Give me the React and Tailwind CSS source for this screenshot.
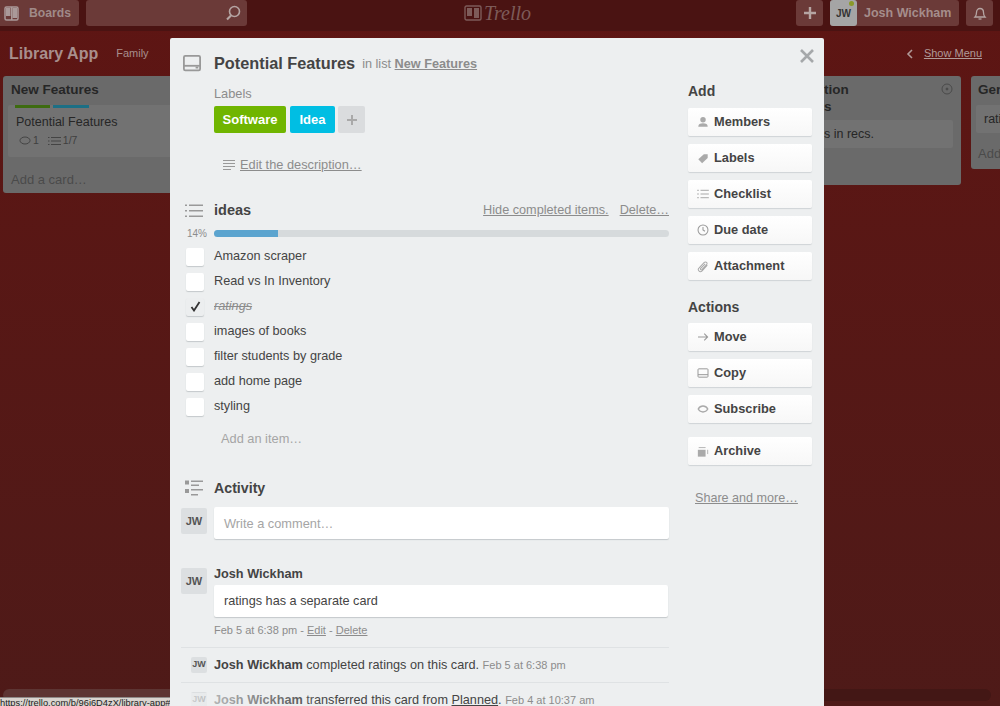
import React from "react";

const CardIcon = ({ s = 18, c = "#999" }) => (
  <svg width={s} height={s * 0.9} viewBox="0 0 20 18" fill="none">
    <rect x="1" y="1" width="18" height="16" rx="1.5" stroke={c} strokeWidth="2" />
    <rect x="1" y="11" width="18" height="2" fill={c} />
    <rect x="14" y="13" width="3" height="2" fill={c} />
  </svg>
);

const ListIcon = ({ c = "#999" }) => (
  <svg width="18" height="16" viewBox="0 0 18 16" fill="none">
    <g fill={c}>
      <rect x="0" y="1.5" width="2" height="1.5" />
      <rect x="0" y="7" width="2" height="1.5" />
      <rect x="0" y="12.5" width="2" height="1.5" />
      <rect x="4" y="1.5" width="14" height="1.5" />
      <rect x="4" y="7" width="14" height="1.5" />
      <rect x="4" y="12.5" width="14" height="1.5" />
    </g>
  </svg>
);

const ActivityIcon = () => (
  <svg width="18" height="17" viewBox="0 0 18 17" fill="#999">
    <rect x="0" y="0.5" width="4" height="4" />
    <rect x="0" y="9" width="4" height="4" />
    <rect x="6" y="0.5" width="12" height="1.5" />
    <rect x="6" y="4.5" width="8" height="1.5" />
    <rect x="6" y="9" width="12" height="1.5" />
    <rect x="6" y="14" width="7" height="1.5" />
  </svg>
);

const SideIcons = {
  Members: (
    <svg width="12" height="12" viewBox="0 0 14 14" fill="#aaa"><circle cx="7" cy="4.5" r="3.2" /><path d="M1.500 12.500c0-3 2-4 5.500-4s5.500 1 5.500 4z" /></svg>
  ),
  Labels: (
    <svg width="12" height="12" viewBox="0 0 14 14" fill="#aaa"><path d="M1.500 8.500 8 2.500h4.500v4.500l-6.500 6z" /></svg>
  ),
  Checklist: (
    <svg width="12" height="10" viewBox="0 0 14 12" fill="#999"><rect y="1" width="2" height="1" /><rect y="5.5" width="2" height="1" /><rect y="10" width="2" height="1" /><rect x="4" y="1" width="10" height="1" /><rect x="4" y="5.5" width="10" height="1" /><rect x="4" y="10" width="10" height="1" /></svg>
  ),
  "Due date": (
    <svg width="12" height="12" viewBox="0 0 14 14" fill="none" stroke="#999" strokeWidth="1.2"><circle cx="7" cy="7" r="5.8" /><path d="M7 3.500V7l2.300 1.500" /></svg>
  ),
  Attachment: (
    <svg width="12" height="13" viewBox="0 0 14 14" fill="none" stroke="#aaa" strokeWidth="1.200"><path d="M12 5.500 6 12c-1.200 1.200-3 1-3.800.2S1.300 9.800 2.500 8.600L8.500 2.300c.8-.8 2-.7 2.700 0s.8 1.800 0 2.600L5.700 10.700c-.4.400-1 .4-1.400 0s-.4-1 0-1.400L9.500 4" /></svg>
  ),
  Move: (
    <svg width="12" height="10" viewBox="0 0 14 12" fill="none" stroke="#999" strokeWidth="1.300"><path d="M1 6h11.500M8.500 2l4 4-4 4" /></svg>
  ),
  Copy: (
    <svg width="12" height="10" viewBox="0 0 14 12" fill="none" stroke="#999" strokeWidth="1.200"><rect x="1" y="1" width="12" height="10" rx="1" /><path d="M1 8h12" /></svg>
  ),
  Subscribe: (
    <svg width="12" height="8" viewBox="0 0 14 10" fill="none" stroke="#aaa" strokeWidth="1.700"><path d="M1 5c1.500-2.500 3.500-3.700 6-3.700S11.500 2.500 13 5c-1.500 2.500-3.500 3.700-6 3.700S2.500 7.500 1 5z" /></svg>
  ),
  Archive: (
    <svg width="12" height="11" viewBox="0 0 14 12" fill="#aaa"><rect x="1" y="4" width="9" height="8" /><rect x="2" y="1" width="8" height="1" /><rect x="12" y="4" width="1" height="5" /></svg>
  ),
};

const SideButton = ({ label, className = "" }) => (
  <button className={`flex h-[28px] w-full items-center rounded-[2px] bg-gradient-to-b from-white to-[#f7f7f7] pl-[9px] text-left text-[12.800px] font-bold text-[#444] shadow-[0_1px_1px_#cfd3d6] ${className}`}>
    <span className="flex w-[12px] shrink-0 justify-center">{SideIcons[label]}</span>
    <span className="ml-[5px]">{label}</span>
  </button>
);

const Avatar = ({ className = "", text = "JW" }) => (
  <div className={`flex shrink-0 items-center justify-center rounded-[2px] bg-[#dcdfe1] font-bold text-[#555] ${className}`}>{text}</div>
);

const items = [
  ["Amazon scraper", false],
  ["Read vs In Inventory", false],
  ["ratings", true],
  ["images of books", false],
  ["filter students by grade", false],
  ["add home page", false],
  ["styling", false],
];

const List = ({ className = "", children }) => (
  <div className={`shrink-0 rounded-[3px] bg-[#6a6a6a] ${className}`}>{children}</div>
);

export default function App() {
  return (
    <div className="relative h-[706px] w-[1000px] overflow-hidden bg-gradient-to-b from-[#5e1513] to-[#4e1a18] font-['Liberation_Sans',Arial,sans-serif]">
      {/* header */}
      <div className="flex h-[31px] items-start bg-[#4a1312]">
        <div className="flex h-[26px] w-[79px] items-center rounded-r-[3px] bg-[#6b3a38] pl-[4px]">
          <svg width="15" height="15" viewBox="0 0 15 15" fill="none"><rect x="1" y="1" width="13" height="13" rx="1.500" stroke="#a99" strokeWidth="1.500" /><rect x="7" y="1" width="1.500" height="13" fill="#a99" /><rect x="2" y="2" width="4.500" height="8" fill="#a99" /><rect x="8.500" y="2" width="4.500" height="10" fill="#a99" /></svg>
          <span className="ml-[10px] text-[12.200px] font-bold text-[#a08a88]">Boards</span>
        </div>
        <div className="ml-[7px] flex h-[26px] w-[161px] items-center justify-end rounded-[3px] bg-[#6b3a38] pr-[6px]">
          <svg width="16" height="16" viewBox="0 0 16 16" fill="none" stroke="#b5a5a3" strokeWidth="1.600"><circle cx="9.500" cy="6.500" r="5" /><path d="M6 10.500l-4 4" strokeWidth="2.200" /></svg>
        </div>
        <div className="ml-[217px] flex h-[26px] items-center gap-[2px]">
          <svg width="18" height="16" viewBox="0 0 18 16" fill="none"><rect x="1" y="1" width="16" height="14" rx="1.500" stroke="#7d5b59" strokeWidth="1.400" /><rect x="3" y="3" width="5" height="8" fill="#7d5b59" /><rect x="10" y="3" width="5" height="10" fill="#7d5b59" /></svg>
          <span className="font-['Liberation_Serif',serif] text-[20px] italic text-[#7d5b59]">Trello</span>
        </div>
        <div className="ml-auto flex">
          <div className="flex h-[26px] w-[27px] items-center justify-center rounded-[3px] bg-[#6b3a38]">
            <svg width="14" height="14" viewBox="0 0 14 14" stroke="#b5a5a3" strokeWidth="2.400"><path d="M7 1v12M1 7h12" /></svg>
          </div>
          <div className="ml-[7px] flex h-[26px] w-[129px] rounded-[3px] bg-[#6b3a38]">
            <div className="relative flex w-[27px] items-center justify-center rounded-[3px] bg-[#a5a5a5] text-[10px] font-bold text-[#333]">
              JW
              <span className="absolute right-[3px] top-[1px] h-[5px] w-[5px] rounded-full bg-[#8a9a28]" />
            </div>
            <span className="ml-[7px] self-center text-[12.500px] font-bold text-[#a58d8b]">Josh Wickham</span>
          </div>
          <div className="ml-[7px] mr-[7px] flex h-[26px] w-[27px] items-center justify-center rounded-[3px] bg-[#6b3a38]">
            <svg width="14" height="15" viewBox="0 0 14 15" fill="none" stroke="#b5a5a3" strokeWidth="1.300"><path d="M2 11c1-1 1.500-2 1.500-4.500C3.500 4 5 2.500 7 2.500s3.500 1.500 3.500 4C10.500 9 11 10 12 11z" /><path d="M5.500 13h3" /></svg>
          </div>
        </div>
      </div>

      {/* board header */}
      <div className="flex h-[45px] items-center pl-[9px] pr-[18px]">
        <span className="text-[16px] font-bold text-[#a88f8d]">Library App</span>
        <span className="ml-[18px] text-[11px] text-[#a88f8d]">Family</span>
        <span className="ml-auto flex items-center text-[11px] text-[#b09a98]">
          <svg width="8" height="10" viewBox="0 0 8 10" fill="none" stroke="#b09a98" strokeWidth="1.600"><path d="M6 1 2 5l4 4" /></svg>
          <span className="ml-[10px] underline">Show Menu</span>
        </span>
      </div>

      {/* board lists */}
      <div className="flex items-start pl-[3px]">
        <List className="h-[117px] w-[260px] px-[5px]">
          <div className="pl-[3px] pt-[5px] text-[13.500px] font-bold leading-[17px] text-[#262626]">New Features</div>
          <div className="mt-[7px] rounded-[2px] bg-[#727272] pb-[5px] pl-[7px]">
            <div className="flex gap-[3px]">
              <span className="h-[3px] w-[35px] bg-[#3d6b10]" />
              <span className="h-[3px] w-[36px] bg-[#1c6f85]" />
            </div>
            <div className="ml-[1px] mt-[6px] text-[12.500px] leading-[16px] text-[#262626]">Potential Features</div>
            <div className="flex h-[22px] items-center pl-[4px] text-[10.500px] text-[#3f3f3f]">
              <svg width="12" height="10" viewBox="0 0 12 10" fill="none" stroke="#444"><ellipse cx="6" cy="4.500" rx="5" ry="3.500" /></svg>
              <span className="ml-[2px]">1</span>
              <span className="ml-[9px] flex"><svg width="13" height="10" viewBox="0 0 13 10" stroke="#444"><path d="M0 1.500h1.500M3 1.500h10M0 5h1.500M3 5h10M0 8.500h1.500M3 8.500h10" /></svg></span>
              <span className="ml-[2px]">1/7</span>
            </div>
          </div>
          <div className="ml-[3px] mt-[15px] text-[13px] leading-[16px] text-[#4a4a4a]">Add a card…</div>
        </List>
        <List className="ml-[530px] h-[109px] w-[168px] px-[8px]">
          <div className="relative pl-[23px] pt-[5px] text-[13.500px] font-bold leading-[17px] text-[#262626]">
            <div>tion</div>
            <div>s</div>
            <svg className="absolute right-[0px] top-[7px]" width="12" height="12" viewBox="0 0 12 12" fill="none" stroke="#4a4a4a"><circle cx="6" cy="6" r="5" /><circle cx="6" cy="6" r="1" fill="#4a4a4a" /></svg>
          </div>
          <div className="mt-[5px] flex h-[28px] items-center rounded-[2px] bg-[#727272] pl-[23px] text-[12.500px] text-[#262626]">s in recs.</div>
        </List>
        <List className="ml-[10px] h-[93px] w-[60px] pl-[5px]">
          <div className="pl-[2px] pt-[5px] text-[13.500px] font-bold leading-[17px] text-[#262626]">Gen</div>
          <div className="mt-[7px] flex h-[28px] items-center overflow-hidden rounded-[2px] bg-[#727272] pl-[8px] text-[12.500px] text-[#262626]">ratings</div>
          <div className="ml-[2px] mt-[13px] text-[13px] leading-[16px] text-[#4a4a4a]">Add</div>
        </List>
      </div>

      {/* scrollbar */}
      <div className="absolute bottom-[5px] left-[3px] h-[12px] w-[988px] rounded-[6px] bg-[#431715]">
        <div className="h-full w-[330px] rounded-[6px] bg-[#5d3533]" />
      </div>

      {/* modal */}
      <div className="absolute left-[170px] top-[38px] flex h-[668px] w-[654px] overflow-hidden rounded-t-[2px] bg-[#edeff0] text-[14px] text-[#444]">
        <div className="w-[499px] shrink-0 pl-[11px]">
          <div className="flex h-[48px] items-center pt-[3px]">
            <div className="w-[33px] shrink-0 pl-[2px]"><CardIcon /></div>
            <span className="text-[16.300px] font-bold text-[#444]">Potential Features</span>
            <span className="ml-[7px] mt-[2px] text-[12.700px] text-[#8c8c8c]">in list <span className="font-bold underline">New Features</span></span>
          </div>
          <div className="pl-[33px]">
            <div className="text-[12.800px] leading-[16px] text-[#8c8c8c]">Labels</div>
            <div className="mt-[4px] flex h-[27px] text-[13px] font-bold text-white">
              <span className="flex w-[72px] items-center justify-center rounded-[2px] bg-[#70b500]">Software</span>
              <span className="ml-[4px] flex w-[45px] items-center justify-center rounded-[2px] bg-[#00bee3]">Idea</span>
              <span className="ml-[3px] flex w-[27px] items-center justify-center rounded-[2px] bg-[#dadcde]">
                <svg width="10" height="10" viewBox="0 0 10 10" stroke="#a9a9a9" strokeWidth="2"><path d="M5 0v10M0 5h10" /></svg>
              </span>
            </div>
            <div className="ml-[9px] mt-[23px] flex h-[17px] items-center">
              <svg width="12" height="10" viewBox="0 0 12 10" stroke="#999"><path d="M0 .5h12M0 3.500h12M0 6.500h12M0 9.500h8" /></svg>
              <span className="ml-[5px] text-[12.800px] text-[#8c8c8c] underline">Edit the description…</span>
            </div>
          </div>

          {/* checklist */}
          <div className="mt-[28px] flex h-[20px] items-center">
            <div className="flex w-[33px] shrink-0 pl-[4px]"><ListIcon /></div>
            <span className="text-[14.500px] font-bold text-[#444]">ideas</span>
            <span className="ml-auto text-[12.700px] text-[#8c8c8c] underline">Hide completed items.</span>
            <span className="ml-[11px] text-[12.700px] text-[#8c8c8c] underline">Delete…</span>
          </div>
          <div className="mt-[8px] flex h-[8px] items-center">
            <span className="w-[33px] shrink-0 pl-[6px] text-[10px] text-[#8c8c8c]">14%</span>
            <div className="h-[7px] flex-1 rounded-[4px] bg-[#d6dadc]">
              <div className="h-full w-[64px] rounded-l-[4px] bg-[#5ba4cf]" />
            </div>
          </div>
          <div className="mt-[7px]">
            {items.map(([t, done]) => (
              <div key={t} className="flex h-[25px] items-center">
                <div className="flex w-[33px] shrink-0 pl-[5px]">
                  <span className={`flex h-[18px] w-[18px] items-center justify-center rounded-[2px] shadow-[0_1px_1px_#c4c8cb] ${done ? "bg-[#eceeef]" : "bg-white"}`}>
                    {done && <svg width="11" height="11" viewBox="0 0 11 11" fill="none" stroke="#333" strokeWidth="1.800"><path d="M1.500 6l2.500 3.500L9.500 1" /></svg>}
                  </span>
                </div>
                {done ? (
                  <span className="text-[12.700px] italic text-[#8c8c8c] line-through">{t}</span>
                ) : (
                  <span className="text-[12.700px] text-[#444]">{t}</span>
                )}
              </div>
            ))}
          </div>
          <div className="mt-[10px] pl-[40px] text-[12.800px] text-[#a5a5a5]">Add an item…</div>

          {/* activity */}
          <div className="mt-[30px] flex h-[20px] items-center">
            <div className="flex w-[33px] shrink-0 pl-[4px]"><ActivityIcon /></div>
            <span className="text-[14.200px] font-bold text-[#444]">Activity</span>
          </div>
          <div className="mt-[9px] flex items-start">
            <Avatar className="mt-[1px] h-[26px] w-[26px] text-[11px]" />
            <div className="ml-[7px] flex h-[32px] flex-1 items-center rounded-[2px] bg-white pl-[10px] text-[12.800px] text-[#a5a5a5] shadow-[0_1px_1px_#c4c8cb]">Write a comment…</div>
          </div>
          <div className="mt-[29px] flex items-start">
            <Avatar className="h-[26px] w-[26px] text-[11px]" />
            <div className="ml-[7px] flex-1">
              <div className="pt-[1px] text-[12.700px] font-bold leading-[10px] text-[#444]">Josh Wickham</div>
              <div className="mr-[1px] mt-[6px] flex h-[32px] items-center rounded-[2px] bg-white pl-[10px] text-[12.700px] text-[#444] shadow-[0_1px_1px_#c4c8cb]">ratings has a separate card</div>
              <div className="mt-[6px] text-[11px] leading-[14px] text-[#8c8c8c]">Feb 5 at 6:38 pm - <span className="underline">Edit</span> - <span className="underline">Delete</span></div>
            </div>
          </div>
          <div className="mt-[10px] flex h-[35px] items-center border-t border-[#dfe2e4] pl-[10px]">
            <Avatar className="h-[16px] w-[16px] text-[9px]" />
            <span className="ml-[7px] text-[12.700px] text-[#444]"><b>Josh Wickham</b> completed ratings on this card. <span className="text-[11px] text-[#8c8c8c]">Feb 5 at 6:38 pm</span></span>
          </div>
          <div className="flex h-[35px] items-center border-t border-[#dfe2e4] pl-[10px]">
            <Avatar className="h-[16px] w-[16px] text-[9px]" />
            <span className="ml-[7px] text-[12.700px] text-[#444]"><b>Josh Wickham</b> transferred this card from <span className="underline">Planned</span>. <span className="text-[11px] text-[#8c8c8c]">Feb 4 at 10:37 am</span></span>
          </div>
        </div>

        {/* sidebar */}
        <div className="ml-[19px] w-[124px] shrink-0 pt-[45px]">
          <div className="text-[14px] font-bold leading-[17px] text-[#444]">Add</div>
          <div className="mt-[8px] flex flex-col gap-[8px]">
            {["Members", "Labels", "Checklist", "Due date", "Attachment"].map((l) => <SideButton key={l} label={l} />)}
          </div>
          <div className="mt-[19px] text-[14px] font-bold leading-[17px] text-[#444]">Actions</div>
          <div className="mt-[7px] flex flex-col gap-[8px]">
            {["Move", "Copy", "Subscribe"].map((l) => <SideButton key={l} label={l} />)}
            <SideButton label="Archive" className="mt-[6px]" />
          </div>
          <div className="mt-[24px] pl-[7px] text-[12.600px] text-[#8c8c8c] underline">Share and more…</div>
        </div>

        <svg className="absolute right-[10px] top-[11px]" width="14" height="14" viewBox="0 0 14 14" stroke="#a5a8aa" strokeWidth="2.600"><path d="M1 1l12 12M13 1 1 13" /></svg>
      </div>

      {/* status bubble */}
      <div className="absolute bottom-0 left-0 h-[9px] w-[170px] overflow-hidden border-t border-[#8e8a88] bg-[#d9d4cf] text-[9.300px] leading-[11px] text-[#222]"><span className="block whitespace-nowrap">https://trello.com/b/96j6D4zX/library-app#</span></div>
      <div className="absolute bottom-0 left-[170px] h-[13px] w-[158px] bg-gradient-to-r from-[#edeff0e6] to-[#edeff000]" />
    </div>
  );
}
